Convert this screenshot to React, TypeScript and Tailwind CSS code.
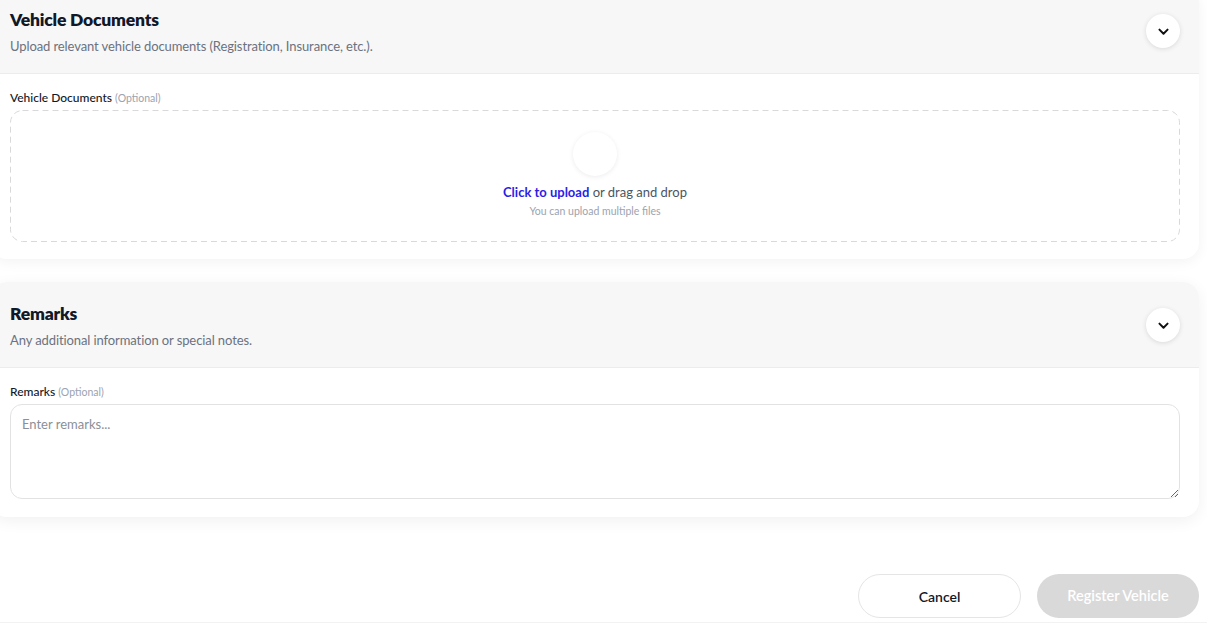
import React from "react";

const FONT = "Lato, 'Noto Sans', sans-serif";

function Chevron() {
  return (
    <button className="w-[34px] h-[34px] rounded-full bg-white shadow-[0_1px_5px_rgba(0,0,0,0.12)] flex items-center justify-center shrink-0">
      <svg width="15" height="15" viewBox="0 0 24 24" fill="none" stroke="#111" strokeWidth="3.2" strokeLinecap="round" strokeLinejoin="round">
        <path d="M5.5 9l6.5 6.5 6.5-6.5" />
      </svg>
    </button>
  );
}

function Header({ title, sub }: { title: string; sub: string }) {
  return (
    <div className="bg-[#f7f7f7] border-b border-[#ececec] px-[19px] pt-5 pb-[19px] flex items-center justify-between">
      <div className="flex flex-col gap-[6px]">
        <div className="text-[17.5px] leading-6 font-extrabold text-[#111827] tracking-[-0.2px]">{title}</div>
        <div className="text-[13px] leading-4 text-[#6b7280] tracking-[-0.1px]">{sub}</div>
      </div>
      <Chevron />
    </div>
  );
}

function Label({ text }: { text: string }) {
  return (
    <div className="text-[12px] leading-4 text-[#111827] font-medium">
      {text} <span className="text-[10.5px] text-[#9ca3af] font-normal">(Optional)</span>
    </div>
  );
}

export default function App() {
  return (
    <div className="w-[1207px] h-[626px] overflow-hidden bg-white" style={{ fontFamily: FONT }}>
      <div className="ml-[-9px] mt-[-12px] w-[1208px] flex flex-col gap-[23px]">
        <div className="rounded-2xl bg-white overflow-hidden shadow-[0_3px_14px_rgba(0,0,0,0.05)]">
          <Header title="Vehicle Documents" sub="Upload relevant vehicle documents (Registration, Insurance, etc.)." />
          <div className="px-[19px] pt-4 pb-[17px] flex flex-col gap-1">
            <Label text="Vehicle Documents" />
            <div className="relative h-[132px] rounded-xl flex flex-col items-center pt-[22px]">
              <svg className="absolute inset-0 w-full h-full pointer-events-none" preserveAspectRatio="none">
                <rect x="0.5" y="0.5" width="1169" height="131" rx="12" ry="12" fill="none" stroke="#d9d9d9" strokeWidth="1" strokeDasharray="6 4" />
              </svg>
              <div className="w-11 h-11 rounded-full bg-white shadow-[0_1px_5px_rgba(0,0,0,0.08)]" />
              <div className="mt-2 text-[13px] leading-4 text-[#4b5563]">
                <span className="text-[#2a1ee6] font-bold">Click to upload</span> or drag and drop
              </div>
              <div className="mt-1 text-[10.5px] leading-[14px] text-[#9ca3af]">You can upload multiple files</div>
            </div>
          </div>
        </div>

        <div className="rounded-2xl bg-white overflow-hidden shadow-[0_4px_16px_rgba(0,0,0,0.06)]">
          <Header title="Remarks" sub="Any additional information or special notes." />
          <div className="px-[19px] pt-4 pb-[18px] flex flex-col gap-1">
            <Label text="Remarks" />
            <textarea
              placeholder="Enter remarks..."
              className="h-[95px] rounded-xl border border-[#e2e2e2] px-[11px] py-[10px] text-[13px] text-[#111827] placeholder:text-[#8a8f98] outline-none resize-y"
              style={{ fontFamily: FONT }}
            />
          </div>
        </div>
      </div>

      <div className="flex justify-end gap-4 mt-[57px] pr-2">
        <button className="w-[163px] h-[44px] rounded-full border border-[#e5e5e5] bg-white text-[14px] font-semibold text-[#111827]">Cancel</button>
        <button className="w-[162px] h-[44px] rounded-full bg-[#d9d9d9] text-[14.5px] font-semibold text-white">Register Vehicle</button>
      </div>
      <div className="mt-1 h-px bg-[#f2f2f2]" />
    </div>
  );
}
